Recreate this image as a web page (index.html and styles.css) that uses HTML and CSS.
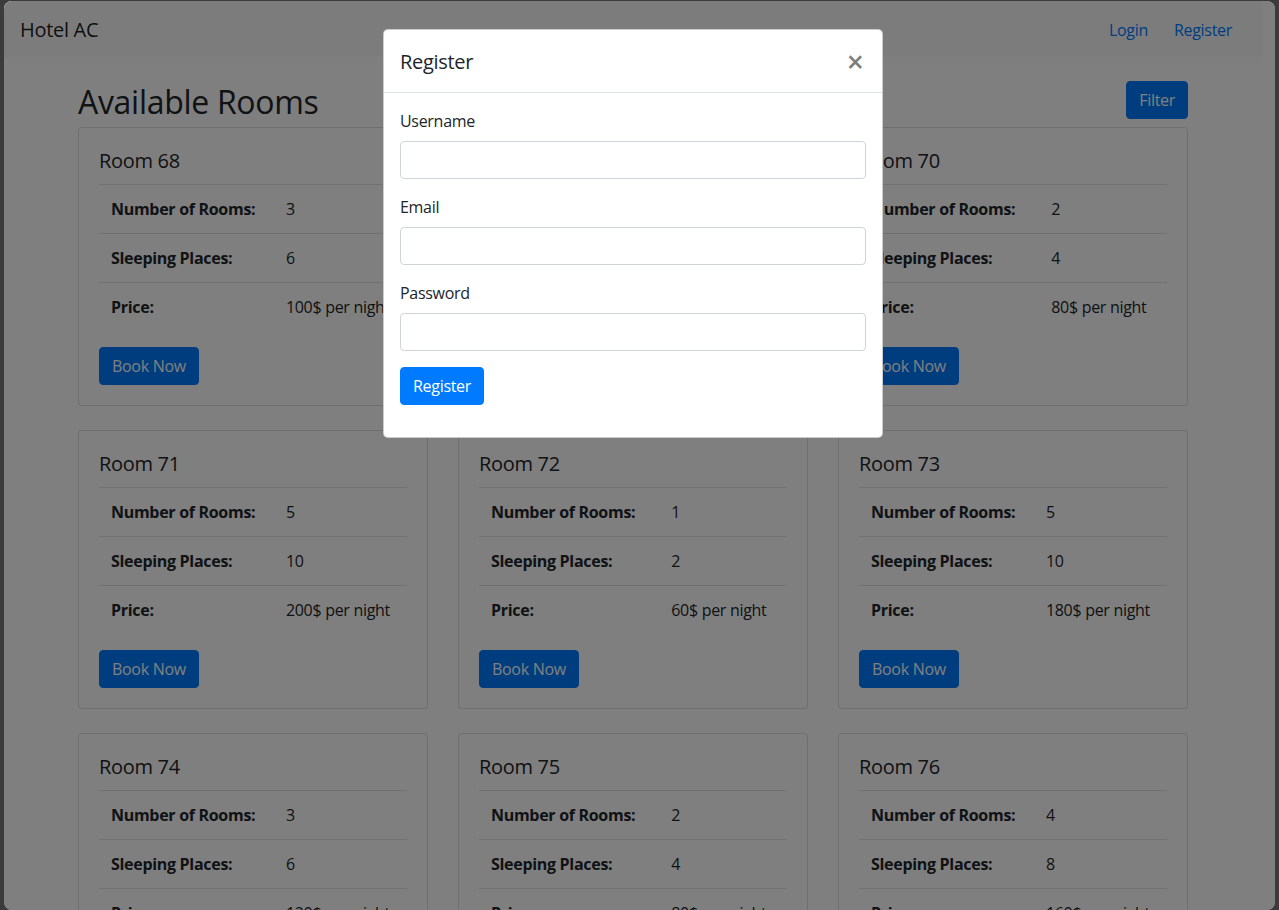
FILE: index.html
```html
<!DOCTYPE html>
<html lang="en">
<head>
<meta charset="utf-8">
<title>Hotel AC</title>
<link rel="stylesheet" href="styles.css">
</head>
<body>
<div class="window">
  <div class="page">
    <nav class="navbar">
      <a class="brand" href="#">Hotel AC</a>
      <ul class="nav">
        <li><a class="nav-link" href="#">Login</a></li>
        <li><a class="nav-link" href="#">Register</a></li>
      </ul>
    </nav>
    <main class="container">
      <div class="head-row">
        <h2 class="page-title">Available Rooms</h2>
        <button class="btn btn-primary">Filter</button>
      </div>
      <div class="grid">
        <div class="card"><h5 class="card-title">Room 68</h5>
          <table class="table"><tr><th>Number of Rooms:</th><td>3</td></tr><tr><th>Sleeping Places:</th><td>6</td></tr><tr><th>Price:</th><td>100$ per night</td></tr></table>
          <button class="btn btn-primary">Book Now</button></div>
        <div class="card"><h5 class="card-title">Room 69</h5>
          <table class="table"><tr><th>Number of Rooms:</th><td>4</td></tr><tr><th>Sleeping Places:</th><td>8</td></tr><tr><th>Price:</th><td>150$ per night</td></tr></table>
          <button class="btn btn-primary">Book Now</button></div>
        <div class="card"><h5 class="card-title">Room 70</h5>
          <table class="table"><tr><th>Number of Rooms:</th><td>2</td></tr><tr><th>Sleeping Places:</th><td>4</td></tr><tr><th>Price:</th><td>80$ per night</td></tr></table>
          <button class="btn btn-primary">Book Now</button></div>
        <div class="card"><h5 class="card-title">Room 71</h5>
          <table class="table"><tr><th>Number of Rooms:</th><td>5</td></tr><tr><th>Sleeping Places:</th><td>10</td></tr><tr><th>Price:</th><td>200$ per night</td></tr></table>
          <button class="btn btn-primary">Book Now</button></div>
        <div class="card"><h5 class="card-title">Room 72</h5>
          <table class="table"><tr><th>Number of Rooms:</th><td>1</td></tr><tr><th>Sleeping Places:</th><td>2</td></tr><tr><th>Price:</th><td>60$ per night</td></tr></table>
          <button class="btn btn-primary">Book Now</button></div>
        <div class="card"><h5 class="card-title">Room 73</h5>
          <table class="table"><tr><th>Number of Rooms:</th><td>5</td></tr><tr><th>Sleeping Places:</th><td>10</td></tr><tr><th>Price:</th><td>180$ per night</td></tr></table>
          <button class="btn btn-primary">Book Now</button></div>
        <div class="card"><h5 class="card-title">Room 74</h5>
          <table class="table"><tr><th>Number of Rooms:</th><td>3</td></tr><tr><th>Sleeping Places:</th><td>6</td></tr><tr><th>Price:</th><td>120$ per night</td></tr></table>
          <button class="btn btn-primary">Book Now</button></div>
        <div class="card"><h5 class="card-title">Room 75</h5>
          <table class="table"><tr><th>Number of Rooms:</th><td>2</td></tr><tr><th>Sleeping Places:</th><td>4</td></tr><tr><th>Price:</th><td>80$ per night</td></tr></table>
          <button class="btn btn-primary">Book Now</button></div>
        <div class="card"><h5 class="card-title">Room 76</h5>
          <table class="table"><tr><th>Number of Rooms:</th><td>4</td></tr><tr><th>Sleeping Places:</th><td>8</td></tr><tr><th>Price:</th><td>160$ per night</td></tr></table>
          <button class="btn btn-primary">Book Now</button></div>
      </div>
    </main>
  </div>
  <div class="backdrop"></div>
  <div class="modal">
    <div class="modal-content">
      <div class="modal-header">
        <h5 class="modal-title">Register</h5>
        <button class="close" aria-label="Close">&times;</button>
      </div>
      <div class="modal-body">
        <form>
          <div class="form-group">
            <label>Username</label>
            <input class="form-control" type="text">
          </div>
          <div class="form-group">
            <label>Email</label>
            <input class="form-control" type="email">
          </div>
          <div class="form-group">
            <label>Password</label>
            <input class="form-control" type="password">
          </div>
          <div class="form-group">
            <button class="btn btn-primary" type="button">Register</button>
          </div>
        </form>
      </div>
    </div>
  </div>
</div>
</body>
</html>
```
FILE: styles.css
```css
* { box-sizing: border-box; }
html, body { height: 100%; }
body {
  margin: 0;
  padding: 1px 4px 0 4px;
  background: #3b3b3b;
  overflow: hidden;
  font-family: "Open Sans", "Noto Sans", sans-serif;
  font-size: 16px;
  line-height: 1.5;
  letter-spacing: -0.3px;
  color: #212529;
}
.window {
  position: relative;
  height: 909px;
  background: #fff;
  border-radius: 8px;
  overflow: hidden;
  padding-right: 13px;
}
.page { width: 100%; }
.navbar {
  display: flex;
  align-items: center;
  justify-content: space-between;
  background: #f8f9fa;
  padding: 8px 16px;
  height: 56px;
}
.brand {
  font-size: 20px;
  line-height: 30px;
  padding: 6px 0 4px;
  color: rgba(0,0,0,.9);
  text-decoration: none;
}
.nav { list-style: none; margin: 0 1px 0 0; padding: 0; display: flex; }
.nav-link {
  display: block;
  padding: 9px 13px 7px;
  color: #007bff;
  text-decoration: none;
}
.container {
  max-width: 1140px;
  margin: 0 auto;
  padding: 0 15px;
}
.head-row {
  display: flex;
  justify-content: space-between;
  align-items: center;
  margin-top: 24px;
  margin-bottom: 8px;
}
.page-title {
  margin: 0;
  padding-top: 3px;
  font-size: 32px;
  font-weight: 500;
  line-height: 35.4px;
}
.grid {
  display: grid;
  grid-template-columns: repeat(3, 1fr);
  column-gap: 30px;
  row-gap: 24px;
}
.card {
  border: 1px solid rgba(0,0,0,.125);
  border-radius: 4px;
  padding: 20px;
  background: #fff;
}
.card-title {
  margin: 0 0 12px;
  padding-top: 1px;
  font-size: 20px;
  font-weight: 500;
  line-height: 23px;
}
.table {
  width: 100%;
  border-collapse: collapse;
  margin-bottom: 16px;
}
.table th, .table td {
  padding: 12px;
  border-top: 1px solid #dee2e6;
  text-align: left;
  vertical-align: top;
}
.table th { font-weight: 700; }
.btn {
  display: inline-block;
  font-family: inherit;
  font-size: 16px;
  line-height: 1.5;
  letter-spacing: -0.3px;
  padding: 6px 12px;
  border: 1px solid transparent;
  border-radius: 4px;
  cursor: pointer;
}
.btn-primary {
  color: #fff;
  background: #007bff;
  border-color: #007bff;
}
.backdrop {
  position: absolute;
  inset: 0;
  background: rgba(0,0,0,.5);
}
.modal {
  position: absolute;
  top: 28px;
  left: 0;
  right: 13px;
  display: flex;
  justify-content: center;
}
.modal-content {
  width: 500px;
  background: #fff;
  border: 1px solid rgba(0,0,0,.2);
  border-radius: 5px;
}
.modal-header {
  display: flex;
  align-items: flex-start;
  justify-content: space-between;
  padding: 16px;
  border-bottom: 1px solid #dee2e6;
}
.modal-title {
  margin: 0;
  padding-top: 1px;
  font-size: 20px;
  font-weight: 500;
  line-height: 29px;
}
.close {
  padding: 17px 18px 13px 16px;
  margin: -16px -16px -16px auto;
  background: transparent;
  border: 0;
  font-family: inherit;
  font-size: 30px;
  font-weight: 600;
  line-height: 1;
  color: #000;
  opacity: .5;
  cursor: pointer;
}
.modal-body { padding: 16px; }
.form-group { margin-bottom: 16px; }
.form-group label {
  display: inline-block;
  margin-bottom: 8px;
  padding-top: 1px;
  line-height: 23px;
}
.form-control {
  display: block;
  width: 100%;
  height: 38px;
  padding: 6px 12px;
  font-family: inherit;
  font-size: 16px;
  border: 1px solid #ced4da;
  border-radius: 4px;
  background: #fff;
}
```
